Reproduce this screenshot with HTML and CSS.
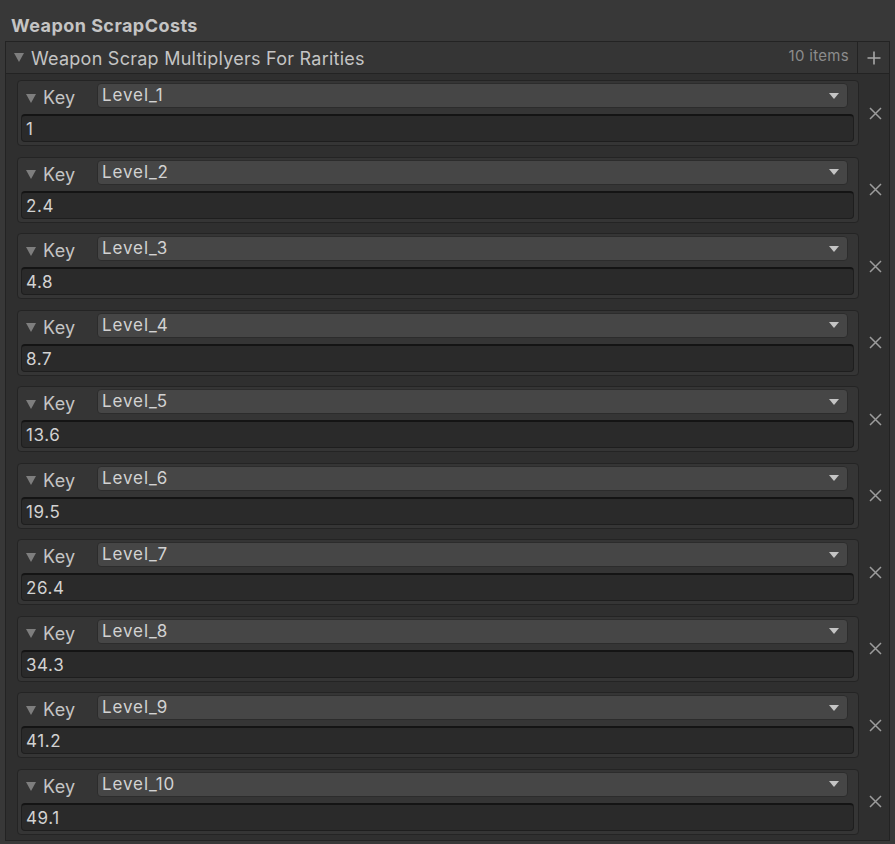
FILE: index.html
```html
<!DOCTYPE html>
<html>
<head>
<meta charset="utf-8">
<link rel="stylesheet" href="styles.css">
</head>
<body>
<div class="title">Weapon ScrapCosts</div>
<div class="list">
  <div class="list-header">
    <span class="fold"></span>
    <span class="hdr-label">Weapon Scrap Multiplyers For Rarities</span>
    <span class="count">10 items</span>
    <span class="add"><svg width="14" height="14" viewBox="0 0 14 14"><path d="M7 0.5V13.5M0.5 7H13.5" stroke="#a8a8a8" stroke-width="1.6" fill="none"/></svg></span>
  </div>
  <div class="list-body">
    <div class="row"><div class="item"><div class="key-row"><span class="fold small"></span><span class="key">Key</span><div class="dropdown"><span>Level_1</span><span class="arrow"></span></div></div><div class="value">1</div></div><div class="remove"><svg width="13" height="13" viewBox="0 0 13 13"><path d="M1 1L12 12M12 1L1 12" stroke="#9c9c9c" stroke-width="1.5" fill="none"/></svg></div></div>
    <div class="row"><div class="item"><div class="key-row"><span class="fold small"></span><span class="key">Key</span><div class="dropdown"><span>Level_2</span><span class="arrow"></span></div></div><div class="value">2.4</div></div><div class="remove"><svg width="13" height="13" viewBox="0 0 13 13"><path d="M1 1L12 12M12 1L1 12" stroke="#9c9c9c" stroke-width="1.5" fill="none"/></svg></div></div>
    <div class="row"><div class="item"><div class="key-row"><span class="fold small"></span><span class="key">Key</span><div class="dropdown"><span>Level_3</span><span class="arrow"></span></div></div><div class="value">4.8</div></div><div class="remove"><svg width="13" height="13" viewBox="0 0 13 13"><path d="M1 1L12 12M12 1L1 12" stroke="#9c9c9c" stroke-width="1.5" fill="none"/></svg></div></div>
    <div class="row"><div class="item"><div class="key-row"><span class="fold small"></span><span class="key">Key</span><div class="dropdown"><span>Level_4</span><span class="arrow"></span></div></div><div class="value">8.7</div></div><div class="remove"><svg width="13" height="13" viewBox="0 0 13 13"><path d="M1 1L12 12M12 1L1 12" stroke="#9c9c9c" stroke-width="1.5" fill="none"/></svg></div></div>
    <div class="row"><div class="item"><div class="key-row"><span class="fold small"></span><span class="key">Key</span><div class="dropdown"><span>Level_5</span><span class="arrow"></span></div></div><div class="value">13.6</div></div><div class="remove"><svg width="13" height="13" viewBox="0 0 13 13"><path d="M1 1L12 12M12 1L1 12" stroke="#9c9c9c" stroke-width="1.5" fill="none"/></svg></div></div>
    <div class="row"><div class="item"><div class="key-row"><span class="fold small"></span><span class="key">Key</span><div class="dropdown"><span>Level_6</span><span class="arrow"></span></div></div><div class="value">19.5</div></div><div class="remove"><svg width="13" height="13" viewBox="0 0 13 13"><path d="M1 1L12 12M12 1L1 12" stroke="#9c9c9c" stroke-width="1.5" fill="none"/></svg></div></div>
    <div class="row"><div class="item"><div class="key-row"><span class="fold small"></span><span class="key">Key</span><div class="dropdown"><span>Level_7</span><span class="arrow"></span></div></div><div class="value">26.4</div></div><div class="remove"><svg width="13" height="13" viewBox="0 0 13 13"><path d="M1 1L12 12M12 1L1 12" stroke="#9c9c9c" stroke-width="1.5" fill="none"/></svg></div></div>
    <div class="row"><div class="item"><div class="key-row"><span class="fold small"></span><span class="key">Key</span><div class="dropdown"><span>Level_8</span><span class="arrow"></span></div></div><div class="value">34.3</div></div><div class="remove"><svg width="13" height="13" viewBox="0 0 13 13"><path d="M1 1L12 12M12 1L1 12" stroke="#9c9c9c" stroke-width="1.5" fill="none"/></svg></div></div>
    <div class="row"><div class="item"><div class="key-row"><span class="fold small"></span><span class="key">Key</span><div class="dropdown"><span>Level_9</span><span class="arrow"></span></div></div><div class="value">41.2</div></div><div class="remove"><svg width="13" height="13" viewBox="0 0 13 13"><path d="M1 1L12 12M12 1L1 12" stroke="#9c9c9c" stroke-width="1.5" fill="none"/></svg></div></div>
    <div class="row"><div class="item"><div class="key-row"><span class="fold small"></span><span class="key">Key</span><div class="dropdown"><span>Level_10</span><span class="arrow"></span></div></div><div class="value">49.1</div></div><div class="remove"><svg width="13" height="13" viewBox="0 0 13 13"><path d="M1 1L12 12M12 1L1 12" stroke="#9c9c9c" stroke-width="1.5" fill="none"/></svg></div></div>
  </div>
</div>
</body>
</html>
```
FILE: styles.css
```css
* { box-sizing: border-box; }
html, body { margin: 0; padding: 0; }
body {
  background: #383838;
  font-family: Inter, "Noto Sans", sans-serif;
  color: #c4c4c4;
  width: 895px;
  height: 844px;
  overflow: hidden;
}
.title {
  height: 41px;
  padding: 15px 0 0 11px;
  font-size: 18px;
  line-height: 22px;
  font-weight: 700;
  color: #c4c4c4;
  letter-spacing: 0.45px;
}
.list {
  margin-left: 5px;
  width: 885px;
  border: 1px solid #232323;
  background: #2f2f2f;
}
.list-header {
  height: 32px;
  display: flex;
  align-items: center;
  background: #353535;
  border-bottom: 1px solid #232323;
  padding-left: 8px;
}
.fold {
  width: 0; height: 0;
  border-left: 5.5px solid transparent;
  border-right: 5.5px solid transparent;
  border-top: 9px solid #7e7e7e;
  margin-right: 7px;
}
.fold.small {
  border-left-width: 5px;
  border-right-width: 5px;
  border-top-width: 9px;
  margin-right: 7px;
  margin-top: 5px;
}
.hdr-label {
  font-size: 18px;
  color: #c4c4c4;
  flex: 1;
  letter-spacing: 0.25px;
  padding-top: 1px;
}
.count {
  font-size: 15px;
  color: #8c8c8c;
  margin-right: 8px;
  margin-top: -4px;
  letter-spacing: 0.3px;
}
.add {
  width: 32px;
  height: 32px;
  border-left: 1px solid #232323;
  display: flex;
  align-items: center;
  justify-content: center;
}
.list-body {
  padding: 6px 0 5px 11px;
  display: flex;
  flex-direction: column;
  gap: 10.56px;
}
.row {
  display: flex;
  align-items: center;
}
.item {
  width: 842px;
  height: 66px;
  border: 1px solid #242424;
  border-radius: 4px;
  background: #353535;
  padding: 2px 4px 3px 3px;
  display: flex;
  flex-direction: column;
}
.key-row {
  height: 25px;
  display: flex;
  align-items: center;
  padding-left: 5px;
  margin-right: 6px;
}
.key {
  font-size: 18px;
  color: #c4c4c4;
  width: 54px;
  padding-top: 4px;
  letter-spacing: 0.3px;
}
.dropdown {
  flex: 1;
  height: 25px;
  background: #464646;
  border: 1px solid #2c2c2c;
  border-radius: 4px;
  display: flex;
  align-items: center;
  justify-content: space-between;
  padding: 0 8px 0 4px;
  font-size: 17px;
  color: #d2d2d2;
  letter-spacing: 0.9px;
}
.dropdown span:first-child { margin-top: -1px; }
.arrow {
  width: 0; height: 0;
  border-left: 5px solid transparent;
  border-right: 5px solid transparent;
  border-top: 6px solid #c4c4c4;
}
.value {
  margin-top: 6px;
  height: 28px;
  background: #2a2a2a;
  border: 1px solid #1e1e1e;
  border-top: 2px solid #141414;
  border-radius: 4px;
  padding: 1px 0 0 4px;
  font-size: 17px;
  line-height: 24px;
  color: #d2d2d2;
  letter-spacing: 0.6px;
}
.remove {
  width: 30px;
  display: flex;
  justify-content: center;
  padding-left: 2px;
}
```
